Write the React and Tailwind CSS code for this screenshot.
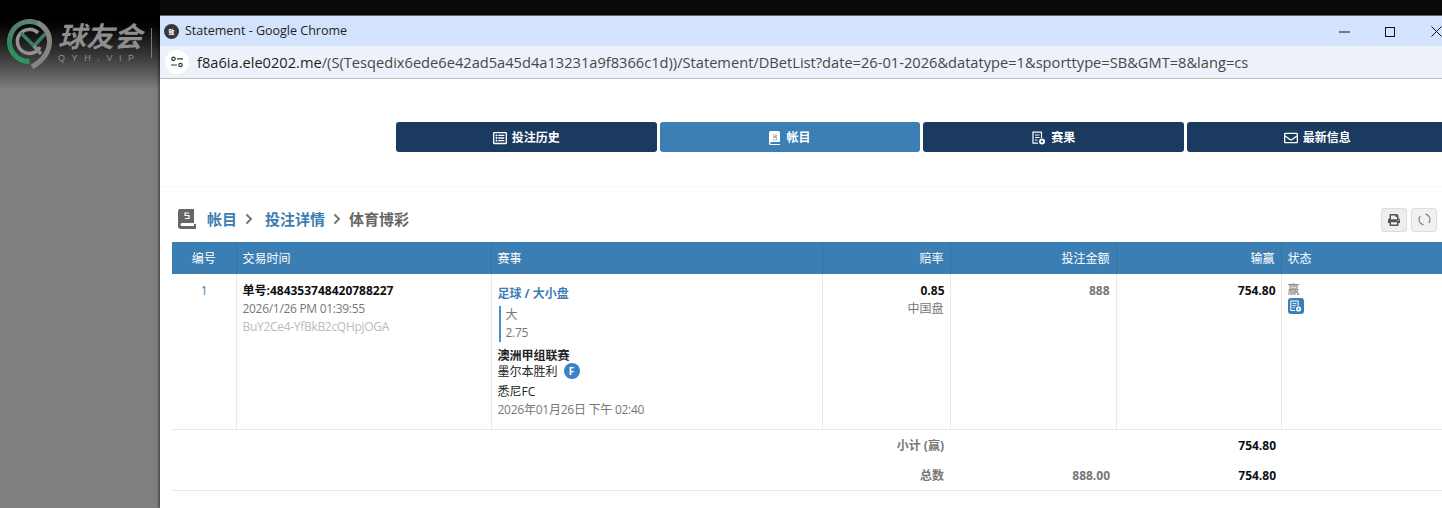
import React from "react";
import { FaRegListAlt, FaRegEnvelope, FaPrint } from "react-icons/fa";

const cjk = '"Open Sans","Noto Sans CJK SC",sans-serif';

function Logo() {
  return (
    <div className="flex items-start pl-[7px] pt-[19px]">
      <svg width="46" height="50" viewBox="0 0 46 50" fill="none" className="shrink-0">
        <defs>
          <linearGradient id="ringg" x1="0" y1="0" x2="0" y2="1">
            <stop offset="0" stopColor="#5b7f70" />
            <stop offset="0.6" stopColor="#2f8a5c" />
            <stop offset="1" stopColor="#2f9460" />
          </linearGradient>
        </defs>
        <path d="M41 15A20 20 0 1 0 22.500 42.500" stroke="url(#ringg)" strokeWidth="5" />
        <path d="M30 3.500A20 20 0 0 1 42.500 22.500C42.500 33 35 42 25 48" stroke="#858585" strokeWidth="5" />
        <path d="M33 28A12 12 0 1 1 31 14" stroke="#949494" strokeWidth="3.500" />
        <path d="M14 14l13 13 11-12" stroke="#3a7f60" strokeWidth="3.500" />
        <path d="M27 27l7 8" stroke="#8a8a8a" strokeWidth="3.500" />
      </svg>
      <div className="ml-[5px] flex w-[86px] shrink-0 flex-col">
        <div className="h-[33px] whitespace-nowrap text-[28px] font-bold italic leading-[33px] text-[#8e8e8e]" style={{ fontFamily: '"Noto Sans CJK SC",sans-serif' }}>
          球友会
        </div>
        <div className="mt-[1px] whitespace-nowrap text-[9px] leading-[10px] tracking-[6.6px] text-[#8f8f8f]" style={{ fontFamily: '"Liberation Sans",sans-serif' }}>
          QYH.VIP
        </div>
      </div>
      <div className="ml-[7px] mt-[9px] h-[30px] w-px bg-[#7a7a7a]"></div>
    </div>
  );
}

function TitleBar() {
  return (
    <div className="flex h-[31px] items-center border-t border-[#666] bg-[#d3e3fd] pl-[4px] pt-[1px] text-[12.5px] text-[#1f1f1f]" style={{ fontFamily: '"Open Sans",sans-serif' }}>
      <div className="flex h-[15px] w-[15px] shrink-0 items-center justify-center rounded-full bg-[#33363b] text-[6px] font-bold leading-none text-white" style={{ fontFamily: '"Noto Sans CJK SC",sans-serif' }}>
        致
      </div>
      <span className="ml-[6px] w-[162px] shrink-0 whitespace-nowrap">Statement - Google Chrome</span>
      <svg width="11" height="2" className="ml-[992px] shrink-0">
        <path d="M0 1h11" stroke="#111" strokeWidth="1" />
      </svg>
      <svg width="10" height="10" className="ml-[35px] shrink-0">
        <rect x="0.5" y="0.5" width="9" height="9" fill="none" stroke="#111" />
      </svg>
      <svg width="11" height="11" className="ml-[36px] shrink-0">
        <path d="M0.5 0.5l10 10M10.5 0.5l-10 10" stroke="#111" />
      </svg>
    </div>
  );
}

function AddressBar() {
  return (
    <div className="flex h-[33px] items-center border-b border-[#bcbcbc] bg-[#edf2fa] pl-[5px]">
      <div className="flex h-[24px] w-[24px] items-center justify-center rounded-full bg-white">
        <svg width="14" height="12" viewBox="0 0 14 12" fill="none" stroke="#333" strokeWidth="1.2">
          <circle cx="3.5" cy="2.8" r="1.7" />
          <path d="M7 2.8h6M1 9h6" />
          <circle cx="10.5" cy="9" r="1.7" />
        </svg>
      </div>
      <div className="ml-[8px] whitespace-nowrap text-[14.65px] leading-none text-[#474747]" style={{ fontFamily: '"Open Sans",sans-serif' }}>
        <span className="text-[#1f1f1f]">f8a6ia.ele0202.me</span>
        /(S(Tesqedix6ede6e42ad5a45d4a13231a9f8366c1d))/Statement/DBetList?date=26-01-2026&amp;datatype=1&amp;sporttype=SB&amp;GMT=8&amp;lang=cs
      </div>
    </div>
  );
}

function BookIcon({ color = "#fff", w = 12, h = 14 }) {
  return (
    <svg width={w} height={h} viewBox="0 0 12 14">
      <path d="M1.5 0h8A1.5 1.5 0 0 1 11 1.5V11H2.2a1 1 0 0 0 0 2H11v1H1.5A1.5 1.5 0 0 1 0 12.5v-11A1.5 1.5 0 0 1 1.5 0z" fill={color} />
      <path d="M3.5 4h4v1.5h-3v1h3V9h-4" fill="none" stroke="#8aa" strokeWidth="0.8" />
    </svg>
  );
}

function ResultIcon({ color = "#fff", dot = "#1a3a5f", size = 14 }) {
  return (
    <svg width={size} height={size} viewBox="0 0 14 14" fill="none">
      <path d="M9.5 7V1.2H1v11h5" stroke={color} strokeWidth="1.2" />
      <path d="M3 4h4.5M3 6.5h4.5M3 9h2.5" stroke={color} strokeWidth="1" />
      <circle cx="10" cy="10.5" r="3" fill={color} />
      <circle cx="10" cy="10.5" r="1.1" fill={dot} />
    </svg>
  );
}

const navItems = [
  { label: "投注历史", icon: <FaRegListAlt size={14} /> },
  { label: "帐目", icon: <BookIcon />, active: true },
  { label: "赛果", icon: <ResultIcon /> },
  { label: "最新信息", icon: <FaRegEnvelope size={14} /> },
];

function Nav() {
  return (
    <div className="ml-[236px] mt-[43px] flex gap-[3px]">
      {navItems.map((it) => (
        <div
          key={it.label}
          className={
            it.active
              ? "flex h-[30px] w-[260.67px] shrink-0 items-center justify-center gap-[5px] rounded-[3px] bg-[#3b7fb4] pt-[1px] text-[12px] font-bold text-white"
              : "flex h-[30px] w-[260.67px] shrink-0 items-center justify-center gap-[5px] rounded-[3px] bg-[#1a3a5f] pt-[1px] text-[12px] font-bold text-white"
          }
        >
          {it.icon}
          <span>{it.label}</span>
        </div>
      ))}
    </div>
  );
}

function Chevron() {
  return (
    <svg width="8" height="12" viewBox="0 0 8 12" fill="none" stroke="currentColor" strokeWidth="2">
      <path d="M1.500 1.500L6 6l-4.500 4.500" />
    </svg>
  );
}

function Breadcrumb() {
  return (
    <div className="flex h-[34px] items-center justify-between pr-[23px]">
      <div className="flex items-center text-[15px] font-bold">
        <span className="ml-[6px]">
          <svg width="18" height="20" viewBox="0 0 18 20">
            <path d="M2 0h14v14H4a1.5 1.5 0 0 0 0 3h12V15h2v5H3a3 3 0 0 1-3-3V2a2 2 0 0 1 2-2z" fill="#666" />
            <path d="M11 4H7v2.5h4V9.500H7" fill="none" stroke="#fff" strokeWidth="1.200" />
          </svg>
        </span>
        <span className="ml-[11px] text-[#3a7eb3]">帐目</span>
        <span className="ml-[8px] mr-[12px] text-[#777]">
          <Chevron />
        </span>
        <span className="text-[#3a7eb3]">投注详情</span>
        <span className="ml-[8px] mr-[8px] text-[#777]">
          <Chevron />
        </span>
        <span className="text-[#666]">体育博彩</span>
      </div>
      <div className="mt-[1px] flex gap-[4px]">
        <div className="flex h-[24px] w-[26px] items-center justify-center rounded-[3px] border border-[#ddd] bg-[#eee] text-[#555]">
          <FaPrint size={12} />
        </div>
        <div className="flex h-[24px] w-[26px] items-center justify-center rounded-[3px] border border-[#ddd] bg-[#f1f1f1]">
          <svg width="13" height="13" viewBox="0 0 13 13" fill="none" stroke="#777" strokeWidth="1.100">
            <path d="M7.500 1.100A5.500 5.500 0 0 1 10.700 10" />
            <path d="M5.500 11.900A5.500 5.500 0 0 1 2.300 3" />
          </svg>
        </div>
      </div>
    </div>
  );
}

function BetTable() {
  const th = "h-[32px] border-r border-[#34729f] px-[6px] pt-[2px] text-[12px] font-normal text-white";
  const td = "border-r border-[#e8e8e8] px-[6px] pt-[8px] align-top";
  return (
    <table className="w-[1280px] table-fixed border-collapse text-[12px] leading-[18px]">
      <colgroup>
        <col className="w-[64px]" />
        <col className="w-[255px]" />
        <col className="w-[331px]" />
        <col className="w-[128px]" />
        <col className="w-[166px]" />
        <col className="w-[165px]" />
        <col />
      </colgroup>
      <thead>
        <tr className="bg-[#3a7eb3]">
          <th className={th + " text-center"}>编号</th>
          <th className={th + " text-left"}>交易时间</th>
          <th className={th + " text-left"}>赛事</th>
          <th className={th + " text-right"}>赔率</th>
          <th className={th + " text-right"}>投注金额</th>
          <th className={th + " text-right"}>输赢</th>
          <th className="h-[32px] px-[6px] pt-[2px] text-left text-[12px] font-normal text-white">状态</th>
        </tr>
      </thead>
      <tbody>
        <tr className="h-[155px]">
          <td className={td + " text-center text-[#3a7eb3]"}>
            <span className="ml-[1px]">1</span>
          </td>
          <td className={td}>
            <div className="font-bold text-[#111]">单号:484353748420788227</div>
            <div className="tracking-[-0.3px] text-[#777]">2026/1/26 PM 01:39:55</div>
            <div className="tracking-[-0.3px] text-[#bbb]">BuY2Ce4-YfBkB2cQHpjOGA</div>
          </td>
          <td className={td}>
            <div className="mt-[3px] font-bold text-[#3a7eb3]">足球 / 大小盘</div>
            <div className="ml-[1px] mt-[3px] border-l-2 border-[#4a90c8] pl-[5px] text-[#777]">
              <div>大</div>
              <div className="tracking-[-0.3px]">2.75</div>
            </div>
            <div className="mt-[6px] h-[15px] font-bold leading-[15px] text-[#222]">澳洲甲组联赛</div>
            <div className="flex h-[18px] items-center text-[#222]">
              墨尔本胜利
              <span className="ml-[6px] mb-[2px] flex h-[16px] w-[16px] items-center justify-center rounded-full bg-[#3a84c6] text-[10px] font-bold text-white">F</span>
            </div>
            <div className="mt-[2px] text-[#222]">悉尼FC</div>
            <div className="tracking-[-0.25px] text-[#777]">2026年01月26日 下午 02:40</div>
          </td>
          <td className={td + " text-right"}>
            <div className="mr-[-1px] font-bold text-[#111]">0.85</div>
            <div className="text-[#777]">中国盘</div>
          </td>
          <td className={td + " text-right font-bold text-[#777]"}>888</td>
          <td className={td + " text-right font-bold text-[#111]"}>
            <div className="mr-[-1px]">754.80</div>
          </td>
          <td className="px-[6px] pt-[8px] align-top text-[#777]">
            <div className="h-[16px] leading-[16px]">赢</div>
            <div className="flex h-[16px] w-[16px] items-center justify-center rounded-[3px] bg-[#3a7eb3]">
              <ResultIcon dot="#3a7eb3" size={12} />
            </div>
          </td>
        </tr>
        <tr className="h-[30px] border-t border-[#e8e8e8] font-bold">
          <td colSpan={3}></td>
          <td className="px-[6px] pt-[4px] text-right text-[#777]">小计 (赢)</td>
          <td></td>
          <td className="pl-[6px] pr-[5px] pt-[4px] text-right text-[#111]">754.80</td>
          <td></td>
        </tr>
        <tr className="h-[31px] border-b border-[#e8e8e8] font-bold">
          <td colSpan={3}></td>
          <td className="px-[6px] pt-[4px] text-right text-[#777]">总数</td>
          <td className="px-[6px] pt-[4px] text-right text-[#777]">888.00</td>
          <td className="pl-[6px] pr-[5px] pt-[4px] text-right text-[#111]">754.80</td>
          <td></td>
        </tr>
      </tbody>
    </table>
  );
}

export default function App() {
  return (
    <div className="flex h-[508px] w-[1442px] overflow-hidden bg-[#808080]" style={{ fontFamily: cjk }}>
      <div className="w-[160px] shrink-0">
        <div className="h-[100px] bg-linear-to-b from-black from-10% to-[#808080] to-90%">
          <Logo />
        </div>
      </div>
      <div className="flex w-[1300px] shrink-0 flex-col">
        <div className="h-[15px] shrink-0 bg-[#0a0a0a]"></div>
        <div className="flex-1 bg-white shadow-[-1px_0_3px_rgba(0,0,0,0.6)]">
          <TitleBar />
          <AddressBar />
          <Nav />
          <div className="mt-[34px] h-px bg-[#f7f7f7]"></div>
          <div className="pl-[12px] pt-[15px]">
            <Breadcrumb />
            <div className="mt-[6px]">
              <BetTable />
            </div>
          </div>
        </div>
      </div>
    </div>
  );
}
